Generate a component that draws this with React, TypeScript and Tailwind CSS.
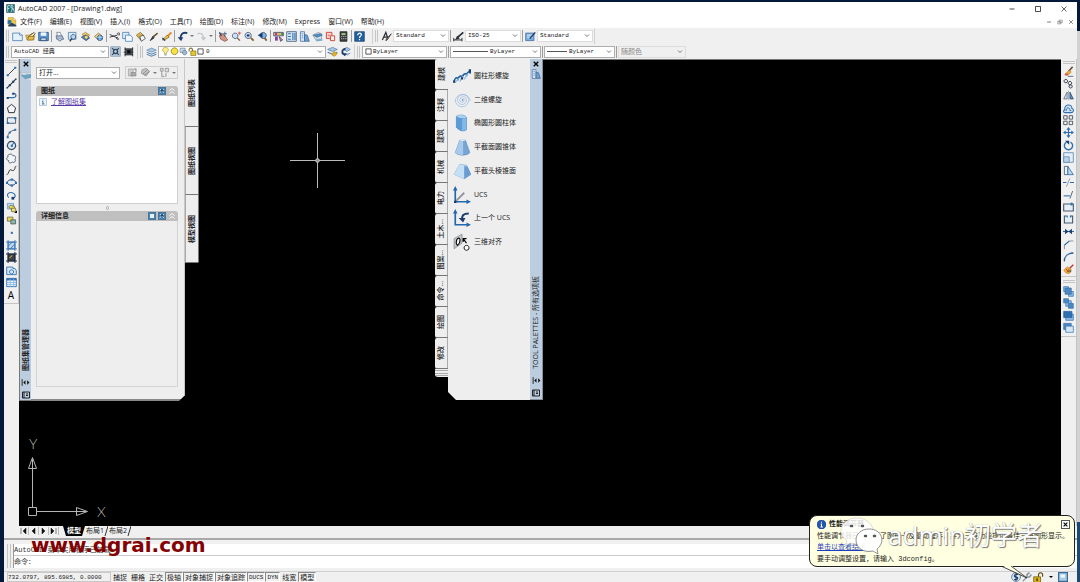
import React from 'react';

type Stroke = [d: string, fill?: string, stroke?: string, width?: number];

const NAVY = '#1d3c6b';
const BLUE = '#2f6fb0';
const SKY = '#8fbbe4';
const PALE = '#d6e6f5';
const INK = '#2b2f36';
const GREY = '#8d949c';
const GOLD = '#e3b02c';
const NONE = 'none';

// every glyph is drawn on a 16 x 16 grid
const GLYPHS: Record<string, Stroke[]> = {
  newFile: [['M1 3h10l4 3v8H1z', '#e4f1fb', BLUE], ['M11 3v3h4', '#fff', BLUE]],
  open: [['M1 6h6l2-2h4v9H3z', '#f0cf67', '#9c7a20'], ['M4 9l9-7 2 2-8 8z', '#f7e39c', INK], ['M3 13l3-5h8l-3 5z', '#e6bd4e', '#8f6f1d']],
  save: [['M1 2h14v12H1z', '#5b9bd0', NAVY], ['M4 2h8v5H4z', '#eef5fb', NONE], ['M4 10h8v4H4z', '#c5d8e8', NAVY]],
  plot: [['M5 7L4 2h5l2 5', '#fff', '#5a6a80'], ['M3 7h9l2 5H4z', '#aebfd2', '#40577a'], ['M6 12a2.500 2.500 0 1 0 5 0', '#dfe7ef', '#40577a']],
  preview: [['M2 2h11v10H2z', '#dcebf8', BLUE], ['M9 5a3.500 3.500 0 1 0 .1 0', '#b7d6ef', NAVY], ['M7 11l-3 4', NONE, INK, 1.800]],
  publish: [['M3 5l5-3 6 4-5 4z', '#f3d573', '#8f6f1d'], ['M2 9l6-3 6 4-5 4z', '#6aa3d6', NAVY], ['M9 6a3 3 0 1 0 .1 0', '#f3d573', NAVY]],
  globe: [['M2 8l6-5 6 5-6 5z', '#efd27a', '#7c6b3d'], ['M10 6a4 4 0 1 0 .1 0', '#4f92cf', NAVY], ['M6 9h8M10 6v8', NONE, '#dfeefa']],
  cut: [['M1 5l11 5M1 9l11-3', NONE, INK, 1.3], ['M12 9a2 1.6 0 1 0 2 3zM12 4a2 1.6 0 1 1 2 2z', NONE, INK, 1.2]],
  copy: [['M1 2h9v9H1z', '#e2effa', BLUE], ['M5 6h7l3 3v6H5z', '#f5fafe', BLUE]],
  paste: [['M2 6l6-4 5 5-5 6z', '#dcb55a', '#7d5d1b'], ['M7 8l5-2 3 5-6 4z', '#f3f7fa', INK]],
  match: [['M14 3L7 9', NONE, '#6b5330', 2.2], ['M7 8l2 2-6 4z', INK, INK]],
  brush: [['M15 2L9 8', NONE, '#dd8f32', 3], ['M9 6l3 3-7 4H2z', '#f0c149', '#7d5d1b'], ['M2 10l4 4', NONE, NAVY, 2]],
  undo: [['M15 3C7 1 5 6 5 12', NONE, NAVY, 2.600], ['M1 9h8l-3 6z', NAVY, NONE]],
  redo: [['M2 4c7-2 9 2 9 9', NONE, '#c2c7cc', 2], ['M7 9h8l-4 5z', '#c2c7cc', NONE]],
  pan: [['M2 7l3-4 5 4 4 6-4 2-6-3z', '#d49484', '#7e4a3e'], ['M10 1v7M7 4h6', NONE, NAVY], ['M2 2l3 5', NONE, NAVY, 1.800]],
  zoomLive: [['M6 3a4 4 0 1 0 .1 0', '#cfe2f3', NAVY], ['M9 10l4 4', NONE, '#835f2b', 2], ['M12 1v5M10 3h5', NONE, '#c03a2b']],
  zoomWin: [['M6 2a4.500 4.500 0 1 0 .1 0', '#cfe2f3', NAVY], ['M10 10l4 4', NONE, '#835f2b', 2.500], ['M4 5h4v3H4z', NAVY, NONE]],
  zoomPrev: [['M9 2a4.500 4.500 0 1 0 .1 0', '#7fb2de', NAVY], ['M11 10l3 4', NONE, '#835f2b', 2.500], ['M1 6l7-4v8z', NAVY, NONE]],
  props: [['M1 2h14v5H1z', '#c9c2e8', INK], ['M3 3h3v3H3z', '#c0392b', NONE], ['M8 3h3v3H8z', '#e3b02c', NONE], ['M12 3h3v3h-3z', '#368a4b', NONE], ['M3 8h4v6H3z', '#7a3fa0', NONE], ['M9 8l5 5-3 2z', '#d58bb3', INK]],
  dcenter: [['M1 1h14v14H1z', '#d7e6f3', NAVY], ['M3 4h4M3 8h4M3 12h4M10 3v10M13 3v10', NONE, BLUE, 1.600]],
  palettes: [['M2 1h6v14H2z', '#d6e6f5', '#3b6090'], ['M8 5l4 1 3 9H8z', '#6b9fce', '#3b6090'], ['M4 4h2M4 7h2M4 10h2', NONE, BLUE]],
  sheets: [['M1 6l8-4 5 2v8l-7 3z', '#d1dae2', '#8d99a5'], ['M2 6l10-2 3 2-8 3z', '#4f90c9', '#3a6d9c'], ['M6 12h9v2H7z', '#6aa3d6', NONE]],
  markup: [['M2 2h8v9H2z', '#fbdcd8', '#d04a3c', 1.4], ['M8 7h6v7H8z', '#f2f2f2', '#d04a3c', 1.4], ['M4 5h4v3H4z', '#e89086', NONE]],
  calc: [['M3 1h10v14H3z', '#3a3c3e', '#1d1e1f'], ['M5 3h6v3H5z', '#9fc27e', NONE], ['M5 8h1M8 8h1M11 8h1M5 11h1M8 11h1M11 11h1', NONE, '#ececec', 1.800]],
  help: [['M1 1h14v14H1z', '#215fa0', NAVY], ['M5.500 6c0-4 6-3.500 5 0-.5 1.500-2.500 1.800-2.500 4M8 11.500v2', NONE, '#fff', 1.800]],
  textStyle: [['M2 13L7 2l3 9M4 9h5', NONE, INK, 1.800], ['M15 4l-6 9-2 1 1-3z', '#8b6b4a', INK]],
  dimStyle: [['M1 13h12M1 10v5M13 10v5', NONE, INK, 1.4], ['M15 2L7 9', NONE, INK, 2.600], ['M6 7l4 4-7 2z', INK, NONE]],
  tableStyle: [['M1 3h12v11H1z', '#78aee0', '#3b6090'], ['M3 6h8M3 9h8', NONE, '#e8f2fb', 1.4], ['M15 2L7 11', NONE, NAVY, 2]],
  gear: [['M1 1h14v14H1z', '#b7cadc', '#7b95ae'], ['M8 5a3 3 0 1 0 .1 0', NONE, '#33475c', 2], ['M3 3l3 3M13 3l-3 3M3 13l3-3M13 13l-3-3', NONE, '#33475c', 1.500]],
  myspace: [['M3 4h11v9H3z', '#4e5256', '#202224'], ['M6 6h5v5H6z', '#0e0f10', NONE], ['M3 2v3M14 2v3M3 15v-3M14 15v-3M1 9h3M12 9h3', NONE, INK, 1.400]],
  layers: [['M1 6l7-3 7 3-7 3z', '#a9c8e4', '#5f89b2'], ['M1 9l7 3 7-3M1 12l7 3 7-3', NONE, '#5f89b2', 1.500]],
  bulb: [['M8 1a4 4 0 0 0-2 8v3h4V9a4 4 0 0 0-2-8z', '#fbef8c', '#a18b2d'], ['M6 13h4v2H6z', '#8c9299', NONE]],
  sun: [['M8 1.500a6 6 0 1 0 .1 0', '#f7e145', '#8b7e1d', 1.400]],
  sunVp: [['M2 2h9v8H2z', '#c6d6e6', '#5c7894'], ['M10 6a4 4 0 1 0 .1 0', '#9fb9d1', '#44617e']],
  unlock: [['M2 8V5c0-4 6-4 6 0v3', NONE, '#81701f', 1.800], ['M5 7h9v8H5z', '#e5c92f', '#6f5f14']],
  swatch: [['M2 2h12v12H2z', '#fff', INK, 1.800]],
  layerSet: [['M1 5l7-3 7 3-7 3z', '#a9c8e4', '#4c76a0'], ['M1 9l7 3 7-3', NONE, '#4c76a0', 1.600], ['M10 8l5 3-4 4-4-2z', GOLD, '#b08d20']],
  layerPrev: [['M5 5l5-3 5 3-5 3zM6 11l5 2 4-3', '#a9c8e4', '#4c76a0'], ['M8 4C3 5 2 8 5 12', NONE, NAVY, 2.600], ['M2 10l8 1-3 4z', NAVY, NONE]],
  line: [['M3 13L13 3', NONE, INK, 1.300], ['M1 12h3v3H1zM12 1h3v3h-3z', BLUE, NONE]],
  xline: [['M1 15L15 1', NONE, INK, 1.500], ['M1 13h2v2H1zM13 1h2v2h-2zM4 9h3v3H4zM9 4h3v3H9z', NAVY, NONE]],
  pline: [['M2 11h9c5 0 4-6 0-6', NONE, BLUE, 1.800], ['M1 10h3v3H1zM9 4h3v3H9z', NAVY, NONE]],
  polygon: [['M8 2l6 5-2 7H4L2 7z', '#f3f6f9', INK, 1.400]],
  rect: [['M2 4h12v8H2z', '#e6eff8', '#46586c', 1.400], ['M1 10h3v3H1zM12 3h3v3h-3z', BLUE, NONE]],
  arc: [['M2 14C3 7 8 3 14 3', NONE, '#46586c', 1.400], ['M1 12h3v3H1zM4 5h3v3H4zM12 1h3v3h-3z', BLUE, NONE]],
  circle: [['M8 2a6 6 0 1 0 .1 0', '#dbe9f6', '#33475c', 1.600], ['M8 8l4-4', NONE, BLUE, 1.500], ['M7 7h3v3H7z', BLUE, NONE]],
  cloud: [['M5 2c3-1 4 0 5 2 4-1 5 3 3 5 2 3-1 6-4 4-3 3-6 1-5-2-4-1-4-4-1-5-1-2 0-4 2-4z', '#f3f6f9', '#46586c', 1.300]],
  spline: [['M1 14c3 0 3-8 6-7s3 2 5 0 0-5 3-5', NONE, INK, 1.400]],
  ellipse: [['M8 4c-8 0-8 8 0 8s8-8 0-8z', '#e6eff8', NAVY, 1.400], ['M7 2h3v3H7zM7 11h3v3H7zM0 7h3v3H0zM13 7h3v3h-3z', BLUE, NONE]],
  ellArc: [['M4 11C-1 6 5 3 9 4s7 6 1 8', NONE, BLUE, 1.600], ['M8 10h4v4H8z', NAVY, NONE]],
  insert: [['M2 2h9v8H2z', '#bcd6ee', '#5f89b2'], ['M6 5a4 3 0 1 0 6 1z', '#eddc62', '#5c5a30'], ['M8 9h6v5H8z', '#efe07a', '#5c5a30'], ['M16 12v4h-4z', '#000', NONE]],
  block: [['M2 3h8v6H2z', '#e8d658', '#5c5a30'], ['M7 7h7v6H7z', '#8bb8a0', '#33475c']],
  point: [['M7 7h3v3H7z', BLUE, NONE]],
  hatch: [['M3 3h10v10H3z', '#bad6ec', BLUE, 1.200], ['M3 0v16M13 0v16M0 3h16M0 13h16M3 9l6-6M6 13l7-7', NONE, BLUE, 1.200]],
  gradient: [['M3 3h10v10H3z', '#3d4146', '#151617'], ['M3 0v16M13 0v16M0 3h16M0 13h16', NONE, '#1b2c44', 1.500], ['M5 9l4-4', NONE, '#b9a24b', 1.500]],
  region: [['M1 3h9v2h3l2 3v6H1z', '#d6e6f5', BLUE, 1.300], ['M8 7a3 3 0 1 0 .1 0', NONE, BLUE, 1.400]],
  table: [['M1 2h14v12H1z', '#eaf3fb', BLUE, 1.300], ['M1 2h14v3H1z', BLUE, NONE], ['M1 8h14M1 11h14M6 3v11M11 3v11', NONE, SKY, 1.300]],
  erase: [['M14 1L8 8', NONE, '#6d4a2b', 2.400], ['M9 6l3 3-5 4-4-1z', '#e9b23a', '#b07a2b'], ['M2 12l4-2 2 3-4 1z', '#d65a49', NONE], ['M7 15h8', NONE, NAVY]],
  copyObj: [['M4 2a2.500 2.500 0 1 0 .1 0M10 5a2.500 2.500 0 1 0 .1 0M11 10a2.300 2.300 0 1 0 .1 0', '#e8eff6', INK, 1.400]],
  mirror: [['M6 3v10H1z', '#d5e3ef', '#46586c'], ['M10 3v10h5z', '#5f90bd', NAVY], ['M8 1v14', NONE, GREY]],
  offset: [['M3 10C0 3 13-1 13 8c4 1 2 6-1 6H3c-3 0-3-4 0-4z', '#cfe2f3', BLUE, 1.500], ['M5 11c0-6 5-5 5 0h2', NONE, BLUE, 1.400]],
  array: [['M1 1h5v5H1zM9 1h5v5H9zM1 9h5v5H1zM9 9h5v5H9z', '#f2f2f2', '#46505a', 1.300]],
  move: [['M8 2v12M2 8h12', NONE, BLUE, 1.800], ['M8 0l3 4H5zM8 16l3-4H5zM0 8l4-3v6zM16 8l-4-3v6z', BLUE, NONE]],
  rotate: [['M5 3a6 6 0 1 0 6 0', NONE, BLUE, 2], ['M3 1h6v6z', NAVY, NONE]],
  scale: [['M1 1h14v14H1z', '#e3eef8', '#6d8fb1', 1.300], ['M1 7h8v8H1z', '#b8d3ea', '#6d8fb1', 1.300]],
  stretch: [['M2 2h5v12H2z', '#eef3f7', '#46586c', 1.200], ['M7 2l8 12H7z', '#bcd6ec', BLUE, 1.200]],
  trim: [['M0 8h5M10 8h6', NONE, BLUE, 1.600], ['M10 2L5 14', NONE, GREY, 1.300]],
  extend: [['M1 10h9', NONE, BLUE, 1.600], ['M14 3l-4 11', NONE, '#46586c', 1.300]],
  breakPt: [['M1 3h14v10H1z', '#e7eff6', '#46586c', 1.600], ['M11 1h3v4h-3z', BLUE, NONE]],
  breakObj: [['M5 3H2v10h12V3h-3', '#e7eff6', '#46586c', 1.600], ['M5 2h2v3H5zM10 2h2v3h-2z', BLUE, NONE]],
  join: [['M0 8h16', NONE, BLUE, 1.600], ['M3 4l5 4-5 4zM13 4L8 8l5 4z', NAVY, NONE]],
  chamfer: [['M2 15V9l7-6h6', NONE, GREY, 1.500], ['M2 9l7-6', NONE, BLUE, 1.500]],
  fillet: [['M2 15C2 7 7 3 15 3', NONE, BLUE, 1.800], ['M2 11v4M11 3h4', NONE, '#46586c', 1.500]],
  explode: [['M15 1L9 7', NONE, '#c0392b', 2], ['M6 4l6 4-3 6-5-1-3-4z', '#e9b23a', '#c98a3a'], ['M4 7l5 5M9 7l-3 5', NONE, '#c0392b', 1.300], ['M9 9h3v3H9z', '#5a7a3a', NONE]],
  front: [['M1 1h7v7H1z', SKY, BLUE], ['M8 8h7v7H8z', SKY, BLUE], ['M3 3h9v9H3z', '#4f86bd', BLUE]],
  back: [['M4 4h8v8H4z', SKY, BLUE], ['M1 1h7v6H1zM8 8h7v7H8z', '#4f86bd', BLUE]],
  above: [['M4 6h11v9H4z', SKY, BLUE], ['M1 2h12v9H1z', BLUE, '#28609b']],
  under: [['M1 2h11v9H1z', '#4f86bd', BLUE], ['M4 6h11v9H4z', PALE, BLUE]],
  helix: [['M1 13c1-5 4-4 3-1 1-5 5-5 4-2 1-5 5-5 4-2 0-4 4-5 3-2', NONE, '#1f5f9f', 1.300], ['M2 14l3-4M6 13l3-5M10 11l3-5', NONE, SKY, 1], ['M0 12h2v2H0zM14 2h2v3h-2zM7 9h2v2H7z', NAVY, NONE]],
  spiral: [['M8 8a1 1 0 0 1 2 0a2 2 0 0 1-4 0a3 3 0 0 1 6 0a4 4 0 0 1-8 0a5 5 0 0 1 10 0a6 6 0 0 1-12 0a7 7 0 0 1 13.500 1', NONE, '#86addb', .5], ['M8 8h1', NONE, BLUE, 1]],
  ellCyl: [['M3 2c3-2 8-1 9 1v11c-3 2-6 1-9-2z', '#5b9bd8', '#3d7ab5', .5], ['M3 2c3-2 8-1 9 1-2 1-7 1-9-1z', '#a9d0f0', NONE], ['M8 4l4-.5V14c-1 .8-3 1-4 .6z', '#82b7e6', NONE]],
  cone: [['M6 2h5l4 11c-3 3-10 3-13 0z', '#76a5d6', '#5584b5', .5], ['M6 2h3v13c-4 0-6-1-7-2z', '#a9c9ea', NONE], ['M6 2c1-1 4-1 5 0-1 1-4 1-5 0z', '#d3e5f6', NONE]],
  frustum: [['M6 2l6 1 4 8-6 4-9-4z', '#9fc4ea', '#7ba4cc', .5], ['M6 2l4 1v12l-9-4z', '#c5dff5', NONE], ['M10 4l3 0 3 7-6 4z', '#6b9cd0', NONE]],
  ucs: [['M2 2v12h12', NONE, '#2368ac', 1.500], ['M0 4l2-4 2 4zM12 12l4 2-4 2z', '#2368ac', NONE], ['M3 13l7-7', NONE, GREY, 1.600], ['M1 13h2v2H1z', '#16365e', NONE]],
  ucsPrev: [['M2 2v12h12', NONE, '#2368ac', 1.500], ['M0 4l2-4 2 4zM12 12l4 2-4 2z', '#2368ac', NONE], ['M14 4C9 4 8 6 8 9', NONE, NAVY, 1.800], ['M5 8h6l-2 4z', NAVY, NONE]],
  align: [['M1 5l7-4v8l-7 5z', '#c8c8c8', GREY, .8], ['M4 5c3-2 3 4 0 6-2-1-1-5 0-6z', '#f4f4f4', '#000', 1], ['M12 11a2.200 2.200 0 1 0 .1 0', '#fff', '#000', .8], ['M12 9L9 5M9 8V5h3', NONE, '#000', 1]],
  stack: [['M0 3l10 2 6-2v4L6 8z', '#eef3f7', '#9caab6', .8], ['M2 8l14-2v5L8 13z', '#6ba4c9', '#6a92ae', .8], ['M8 13l8-1v3z', '#d4dde5', NONE]],
  sheetA: [['M2 3h7v10H2z', '#cfcfcf', '#999'], ['M6 8h7v5H6z', '#aaa', '#888'], ['M10 3l3 0v4', NONE, '#888', 1.500]],
  sheetB: [['M3 4l6-2 5 4-5 7-7-4z', '#c5c5c5', '#888'], ['M4 10l7-6M6 12l7-5', NONE, '#777']],
  tree: [['M2 2h4v4H2zM9 2h5v5H9zM4 6v8h4', '#ddd', '#999', 1.300], ['M10 9v5', NONE, '#aaa', 2]],
  autohide: [['M2 2v12', NONE, '#111', 1.500], ['M8 4v8L4 8zM11 4v8l4-4z', '#111', NONE]],
  menuBox: [['M1 2h14v12H1z', NONE, '#111', 1.800], ['M4 2v12M8 6h4M8 9h4', NONE, '#111', 1.800]],
  close: [['M2 2l12 12M14 2L2 14', NONE, '#000', 3.600]],
  closeThin: [['M3 3l10 10M13 3L3 13', NONE, '#111', 1.300]],
  min: [['M3 8h10', NONE, '#111', 1.500]],
  max: [['M3 3h10v10H3z', NONE, '#111', 1.500]],
  restore: [['M6 3h8v7H6zM2 6h8v7H2z', '#fff', '#555', 1.300]],
  dwg: [['M2 1h8l4 4v8H2z', '#f1ca48', '#b8952f'], ['M1 5h6v6H1z', '#2e6ca8', NONE], ['M2 13l6-4 7 4v2H2z', '#2a4568', NONE], ['M10 1v4h4', '#fff', '#b8952f']],
  logo: [['M1 1h14v14H1z', '#1e6e78', '#18454c'], ['M3 14V3h4M3 8h3M9 2c5 0 4 5 0 5zM9 14l3-7 3 7', NONE, '#d2f0f2', 1.500]],
  sheetBtn: [['M0 0h16v16H0z', '#4f81a8', '#31587a'], ['M4 4h8v8H4z', '#e3f1fb', NONE]],
  sheetBtn2: [['M0 0h16v16H0z', '#4f81a8', '#31587a'], ['M3 12l9-8M4 4l8 8', NONE, '#c5dced', 1.800], ['M6 5h4v4H6z', '#1f3f66', NONE]],
  chevUp: [['M3 7l5-4 5 4M3 13l5-4 5 4', NONE, '#fff', 1.800]],
  info: [['M1 1h14v14H1z', '#eef6fd', '#9cb9d4', 1.500], ['M8 3v2M6 7h2v5M6 12h5', NONE, '#2c5a8a', 1.500]],
  infoBall: [['M8 0a8 8 0 1 0 .1 0', '#2257b3', '#173a80'], ['M8 3v2M6.500 7H8v5M6 12.500h4.500', NONE, '#fff', 1.800]],
  commCenter: [['M8 1a7 7 0 1 0 .1 0', '#dce8f2', '#4b6f91', 1.300], ['M11 4C4 3 4 8 8 8s4 5-3 4M8 2v12', NONE, NAVY, 1.800]],
  plug: [['M1 15l7-7', NONE, GREY, 2], ['M8 8l4 0 3-4M8 8V4l4-3', NONE, GREY, 2.500]],
  lock: [['M8 7V4c0-4 6-4 6 0v3', NONE, '#5c4a05', 1.600], ['M1 7h10v8H1z', '#dfb516', '#5c4a05'], ['M6 9v4', NONE, '#3b2f00', 2]],
  screen: [['M1 1h14v14H1z', '#a9cce6', '#3b6c95', 2], ['M4 4h7v5H4z', '#f0f8fd', NONE]],
};

const Glyph = ({ name, className = 'size-[11px]' }: { name: string; className?: string }) => (
  <svg viewBox="0 0 16 16" className={`shrink-0 ${className}`} aria-hidden="true">
    {GLYPHS[name].map(([d, fill = NONE, stroke = NONE, width = 1], i) => (
      <path key={i} d={d} fill={fill} stroke={stroke} strokeWidth={width} />
    ))}
  </svg>
);

const ToolButton = ({ name, wide = true }: { name: string; wide?: boolean }) => (
  <button aria-label={name} className={`flex h-3 shrink-0 items-center justify-center ${wide ? 'w-[13px]' : 'w-3'}`}>
    <Glyph name={name} />
  </button>
);

const Sep = () => <span className="mx-px h-3 w-px shrink-0 bg-[#9c9c9c]" />;

const Grip = () => (
  <span className="mx-[2px] flex shrink-0 gap-px">
    <i className="h-3 w-px bg-[#c4c4c4]" />
    <i className="h-3 w-px bg-[#c4c4c4]" />
  </span>
);

const Arrow = () => (
  <span className="flex w-[6px] shrink-0 justify-center">
    <i className="border-x-2 border-t-2 border-x-transparent border-t-[#777]" />
  </span>
);

interface ComboProps {
  label: string;
  value: string;
  width: string;
  lead?: React.ReactNode;
  tone?: string;
  mono?: boolean;
}

const Combo = ({ label, value, width, lead, tone = 'border-[#adadad] bg-white text-[#222]', mono = true }: ComboProps) => (
  <div className={`relative flex h-3 shrink-0 items-center border pl-[2px] ${tone} ${width}`}>
    {lead}
    <select
      aria-label={label}
      className={`h-full min-w-0 flex-1 appearance-none bg-transparent leading-[10px] outline-none ${
        mono ? "font-['Liberation_Mono','Noto_Sans_CJK_SC',monospace] text-[6px]" : 'text-[7px]'
      }`}
    >
      <option>{value}</option>
    </select>
    <svg viewBox="0 0 6 4" className="pointer-events-none absolute right-[2px] h-1 w-[6px]" aria-hidden="true">
      <path d="M1 .5l2 2 2-2" fill="none" stroke="#777" />
    </svg>
  </div>
);

const MENUS = ['文件(F)', '编辑(E)', '视图(V)', '插入(I)', '格式(O)', '工具(T)', '绘图(D)', '标注(N)', '修改(M)', 'Express', '窗口(W)', '帮助(H)'];

const STANDARD_BAR = [
  ['newFile', 'open', 'save'],
  ['plot', 'preview', 'publish', 'globe'],
  ['cut', 'copy', 'paste', 'match', 'brush'],
  ['undo', '>', 'redo', '>'],
  ['pan', 'zoomLive', 'zoomWin', 'zoomPrev'],
  ['props', 'dcenter', 'palettes', 'sheets', 'markup', 'calc'],
  ['help'],
];

const DRAW_TOOLS = ['line', 'xline', 'pline', 'polygon', 'rect', 'arc', 'circle', 'cloud', 'spline', 'ellipse', 'ellArc', 'insert', 'block', 'point', 'hatch', 'gradient', 'region', 'table'];

const MODIFY_TOOLS = ['erase', 'copyObj', 'mirror', 'offset', 'array', 'move', 'rotate', 'scale', 'stretch', 'trim', 'extend', 'breakPt', 'breakObj', 'join', 'chamfer', 'fillet', 'explode'];

const PALETTE_TABS = ['建模', '注释', '建筑', '机械', '电力', '土木...', '图案...', '命令...', '绘图', '修改'];

const PALETTE_TOOLS = [
  { icon: 'helix', label: '圆柱形螺旋' },
  { icon: 'spiral', label: '二维螺旋' },
  { icon: 'ellCyl', label: '椭圆形圆柱体' },
  { icon: 'cone', label: '平截面圆锥体' },
  { icon: 'frustum', label: '平截头棱锥面' },
  { icon: 'ucs', label: 'UCS' },
  { icon: 'ucsPrev', label: '上一个 UCS' },
  { icon: 'align', label: '三维对齐' },
];

const STATUS_TOGGLES = [
  { label: '捕捉', on: false },
  { label: '栅格', on: false },
  { label: '正交', on: false },
  { label: '极轴', on: true },
  { label: '对象捕捉', on: true },
  { label: '对象追踪', on: true },
  { label: 'DUCS', on: true },
  { label: 'DYN', on: true },
  { label: '线宽', on: false },
  { label: '模型', on: true },
];

const Vertical = ({ children }: { children: React.ReactNode }) => (
  <span className="rotate-180 leading-[10px] whitespace-nowrap [text-orientation:sideways] [writing-mode:vertical-rl]">{children}</span>
);

const Header = () => (
  <header className="bg-white text-[#222]">
    <div className="flex h-[13px] items-center pl-[2px]">
      <Glyph name="logo" className="size-[9px]" />
      <h1 className="ml-[3px] text-[7px] leading-[13px]">AutoCAD 2007 - [Drawing1.dwg]</h1>
      <div className="mr-[9px] ml-auto flex gap-[18px]">
        {['min', 'max', 'closeThin'].map(n => (
          <button key={n} aria-label={n} className="flex"><Glyph name={n} className="size-2" /></button>
        ))}
      </div>
    </div>
    <div className="flex h-[13px] items-center pl-[3px]">
      <Glyph name="dwg" className="size-[10px]" />
      <nav className="ml-[3px] flex gap-2 text-[7px] leading-[13px]">
        {MENUS.map(m => <button key={m}>{m}</button>)}
      </nav>
      <div className="mr-[3px] ml-auto flex gap-[5px]">
        {['min', 'restore', 'closeThin'].map(n => (
          <button key={n} aria-label={`drawing ${n}`} className="flex"><Glyph name={n} className="size-[6px]" /></button>
        ))}
      </div>
    </div>
  </header>
);

const Toolbars = () => (
  <div className="bg-[#f0f0f0]">
    <div className="flex h-4 items-center">
      <div className="flex h-[15px] items-center border-r border-[#d0d0d0] pr-[6px]">
        <Grip />
        {STANDARD_BAR.map((group, g) => (
          <React.Fragment key={g}>
            {g > 0 && <Sep />}
            {group.map((n, i) => (n === '>' ? <Arrow key={i} /> : <ToolButton key={n} name={n} />))}
          </React.Fragment>
        ))}
      </div>
      <div className="flex h-[15px] items-center border-r border-[#d0d0d0] pr-px">
        <Grip />
        <ToolButton name="textStyle" />
        <Combo label="文字样式" value="Standard" width="w-14" tone="border-[#dcdcdc] bg-white text-[#222]" />
        <Sep />
        <ToolButton name="dimStyle" />
        <Combo label="标注样式" value="ISO-25" width="w-14" tone="border-[#dcdcdc] bg-white text-[#222]" />
        <Sep />
        <ToolButton name="tableStyle" />
        <Combo label="表格样式" value="Standard" width="w-14" tone="border-[#dcdcdc] bg-white text-[#222]" />
      </div>
    </div>
    <div className="flex h-[15px] items-center">
      <Grip />
      <Combo label="工作空间" value="AutoCAD 经典" width="w-[98px]" />
      <ToolButton name="gear" />
      <ToolButton name="myspace" />
      <span className="ml-[2px] h-[15px] border-r border-[#d0d0d0]" />
      <Grip />
      <ToolButton name="layers" />
      <Combo
        label="图层"
        value="0"
        width="w-[168px]"
        lead={['bulb', 'sun', 'sunVp', 'unlock', 'swatch'].map(n => (
          <Glyph key={n} name={n} className={n === 'swatch' ? 'mr-[2px] size-[7px]' : 'size-[9px]'} />
        ))}
      />
      <ToolButton name="layerSet" />
      <ToolButton name="layerPrev" />
      <span className="ml-[2px] h-[15px] border-r border-[#d0d0d0]" />
      <Grip />
      <Combo label="颜色" value="ByLayer" width="w-[85px]" lead={<Glyph name="swatch" className="mr-px size-[7px]" />} />
      <Sep />
      <Combo label="线型" value="ByLayer" width="w-[91px]" lead={<i className="mr-[2px] h-px w-[35px] bg-[#555]" />} />
      <Sep />
      <Combo label="线宽" value="ByLayer" width="w-[71px]" lead={<i className="mr-[2px] h-px w-5 bg-[#555]" />} />
      <Sep />
      <Combo label="打印样式" value="随颜色" width="w-[68px]" mono={false} tone="border-[#dcdcdc] bg-[#f0f0f0] text-[#888]" />
    </div>
  </div>
);

const PanelTitle = ({ title, icons }: { title: string; icons: string[] }) => (
  <div className="flex h-[10px] shrink-0 items-center rounded-t-[3px] bg-[#bfbfbf] pr-[2px] pl-[5px]">
    <h2 className="mr-auto text-[7px] leading-[10px] font-bold text-[#222]">{title}</h2>
    <span className="flex items-center gap-[2px]">
      {icons.map(n => <button key={n} aria-label={n} className="flex"><Glyph name={n} className="size-2" /></button>)}
    </span>
  </div>
);

const SheetSetManager = () => (
  <section className="absolute -top-px left-0 flex h-[342px] text-[7px] text-[#222]">
    <div className="flex w-3 flex-col items-center border-b border-l border-[#777] bg-[#bccddf] pb-px">
      <button aria-label="关闭" className="mt-[2px] flex"><Glyph name="close" className="size-[6px]" /></button>
      <Glyph name="stack" className="mt-[3px] size-[11px]" />
      <span className="mt-auto mb-1 font-bold"><Vertical>图纸集管理器</Vertical></span>
      <Glyph name="autohide" className="mb-1 size-[9px]" />
      <Glyph name="menuBox" className="size-2" />
    </div>
    <div className="w-[154px] bg-[#888] pb-[2px] [clip-path:polygon(0_0,100%_0,100%_calc(100%-6px),calc(100%-6px)_100%,0_100%)]">
      <div className="flex h-full flex-col border-r border-[#c8c8c8] bg-[#eeeeee] pt-[7px] pr-[6px] pb-3 pl-[5px]">
        <div className="mb-[7px] flex items-center justify-between">
          <Combo label="图纸集" value="打开..." width="w-[84px]" mono={false} />
          <div className="flex h-[13px] items-center border border-[#cfcfcf]">
            <ToolButton name="sheetA" />
            <ToolButton name="sheetB" />
            <Arrow />
            <ToolButton name="tree" />
            <Arrow />
          </div>
        </div>
        <PanelTitle title="图纸" icons={['sheetBtn2', 'chevUp']} />
        <div className="h-[108px] shrink-0 border border-t-0 border-[#cfcfcf] bg-white px-[2px] pt-px">
          <div className="flex items-center">
            <Glyph name="info" className="size-2" />
            <a href="#sheets" className="ml-1 leading-[9px] text-[#5a3aa8] underline">了解图纸集</a>
          </div>
        </div>
        <div className="flex h-[7px] shrink-0 items-center justify-center">
          <i className="h-1 w-[3px] rounded-full border border-[#aaa]" />
        </div>
        <PanelTitle title="详细信息" icons={['sheetBtn', 'sheetBtn2', 'chevUp']} />
        <div className="flex-1 border border-t-0 border-[#d4d4d4]" />
      </div>
    </div>
    <div className="flex w-[14px] flex-col">
      {['图纸列表', '图纸视图', '模型视图'].map((t, i) => (
        <button
          key={t}
          className={`flex h-[68px] items-center justify-center border-r border-b border-[#777] bg-[#eeeeee] font-bold ${i > 0 ? 'border-l border-l-[#aaa]' : ''} ${i === 2 ? 'rounded-br-[2px]' : ''}`}
        >
          <Vertical>{t}</Vertical>
        </button>
      ))}
    </div>
  </section>
);

const ToolPalettes = () => (
  <section className="absolute -top-px left-[416px] flex h-[341px] text-[7px] text-[#222]">
    <div className="flex w-[13px] flex-col">
      {PALETTE_TABS.map((t, i) => (
        <button
          key={t}
          className={`flex h-[31px] items-center justify-center rounded-l-[2px] border-b border-[#777] bg-[#eeeeee] font-medium ${i > 0 ? 'border-r border-r-[#aaa]' : ''}`}
        >
          <Vertical>{t}</Vertical>
        </button>
      ))}
      <span className="flex h-2 flex-col justify-evenly rounded-bl-[3px] bg-[#eeeeee]">
        <i className="h-px bg-[#aaa]" />
        <i className="h-px bg-[#aaa]" />
        <i className="h-px bg-[#aaa]" />
      </span>
    </div>
    <div className="w-[82px] bg-[#eeeeee] pt-[5px] pl-[5px] [clip-path:polygon(0_0,100%_0,100%_100%,8px_100%,0_calc(100%-8px))]">
      <ul className="flex h-[190px] flex-col">
        {PALETTE_TOOLS.map(t => (
          <li key={t.icon} className="flex flex-1 items-center">
            <button className="flex items-center gap-[3px]">
              <Glyph name={t.icon} className="size-[18px]" />
              <span className="leading-[10px] whitespace-nowrap">{t.label}</span>
            </button>
          </li>
        ))}
      </ul>
    </div>
    <div className="flex w-[13px] flex-col items-center border-r border-b border-[#8a9099] bg-[#bccddf] pb-[2px]">
      <button aria-label="关闭" className="mt-[2px] flex"><Glyph name="close" className="size-[6px]" /></button>
      <Glyph name="palettes" className="mt-[2px] size-[10px]" />
      <span className="mt-auto mb-1"><Vertical>TOOL PALETTES - 所有选项板</Vertical></span>
      <Glyph name="autohide" className="mb-1 size-[9px]" />
      <Glyph name="menuBox" className="size-2" />
    </div>
  </section>
);

const Canvas = () => (
  <main className="relative min-w-0 flex-1 border-t border-[#777] bg-black">
    <SheetSetManager />
    <ToolPalettes />
    {/* crosshair */}
    <svg viewBox="0 0 55 55" className="absolute top-[73px] left-[271px] size-[55px]" aria-hidden="true">
      <path d="M0 27.5h55M27.5 0v55" fill="none" stroke="#bbb" />
      <path d="M26 26h3v3h-3z" fill="#888" stroke="#bbb" />
    </svg>
    {/* UCS axes */}
    <svg viewBox="0 0 90 90" className="absolute bottom-0 left-2 size-[90px]" aria-hidden="true">
      <g fill="none" stroke="#b5b5b5">
        <path d="M1.500 71.500h8v8h-8zM5.500 71.500v-40M9.500 75.500h40" />
        <path d="M5.500 21.500l-4 11h8zM60.500 75.500l-11-4v8zM5.500 23v9M59 75.500h-9" />
      </g>
      <g fill="#b5b5b5" fontFamily="Lato, sans-serif" fontWeight="300" fontSize="14">
        <text x="2" y="13">Y</text>
        <text x="70" y="81">X</text>
      </g>
    </svg>
  </main>
);

const DrawColumn = () => (
  <aside className="w-[15px] shrink-0 bg-[#f0f0f0]">
    <div className="flex flex-col items-center border-r border-b border-[#c4c4c4] pb-[2px]">
      <span className="mt-px mb-[2px] h-[3px] w-3 border-y border-[#c4c4c4]" />
      <div className="flex h-[236px] flex-col justify-between">
        {DRAW_TOOLS.map(n => <ToolButton key={n} name={n} wide={false} />)}
        <button aria-label="多行文字" className="h-3 text-center text-[10px] leading-3 text-black">A</button>
      </div>
    </div>
  </aside>
);

const ModifyColumn = () => (
  <aside className="w-4 shrink-0 border-r border-[#c4c4c4] bg-[#f0f0f0]">
    <div className="flex flex-col items-center border-b border-[#c4c4c4] pb-px">
      <span className="mt-[2px] mb-px h-[3px] w-3 border-y border-[#c4c4c4]" />
      <div className="flex h-[210px] flex-col justify-between">
        {MODIFY_TOOLS.map(n => <ToolButton key={n} name={n} wide={false} />)}
      </div>
    </div>
    <div className="flex flex-col items-center border-b border-[#c4c4c4] pb-[2px]">
      <span className="mt-[3px] mb-[2px] h-[3px] w-3 border-y border-[#c4c4c4]" />
      <div className="flex h-[49px] flex-col justify-between">
        {['front', 'back', 'above', 'under'].map(n => <ToolButton key={n} name={n} wide={false} />)}
      </div>
    </div>
  </aside>
);

const LayoutTabs = () => (
  <div className="ml-[15px] flex h-[10px] items-center text-[7px] leading-[10px] text-[#222]">
    <div className="flex">
      {['M2 1v6M7 1v6L4 4z', 'M6 1v6L3 4z', 'M3 1v6l3-3z', 'M7 1v6M2 1v6l3-3z'].map((d, i) => (
        <button key={d} aria-label={`布局导航 ${i + 1}`} className="flex w-[10px] justify-center border-r border-[#bbb]">
          <svg viewBox="0 0 9 8" className="h-2 w-[9px]"><path d={d} fill="#111" stroke="#111" strokeWidth=".5" /></svg>
        </button>
      ))}
    </div>
    <button className="ml-1 bg-black px-1 font-bold text-white [clip-path:polygon(0_0,100%_0,calc(100%-3px)_100%,3px_100%)]">模型</button>
    {['布局1', '布局2'].map(t => (
      <button key={t} className="flex items-center pl-px">
        {t}
        <svg viewBox="0 0 4 10" className="h-[10px] w-1"><path d="M4 0L1 10" stroke="#333" /></svg>
      </button>
    ))}
  </div>
);

const CommandLine = () => (
  <div className="mt-[2px] flex border-t-2 border-[#a9a9a9] bg-[#f0f0f0] pt-1 pb-[3px] pl-[3px]">
    <span className="mr-[2px] w-1 border-x border-[#c4c4c4]" />
    <div className="flex-1 border-l border-[#999] font-['Liberation_Mono','Noto_Sans_CJK_SC',monospace] text-[7px] text-[#333]">
      <p className="h-3 border-b border-[#ccc] bg-white leading-3">AutoCAD 菜单实用程序已加载.</p>
      <label className="flex h-3 items-center bg-white pt-px">
        命令：
        <input aria-label="命令" className="min-w-0 flex-1 outline-none" />
      </label>
    </div>
  </div>
);

const StatusBar = () => (
  <footer className="flex h-[11px] items-center border-t border-[#d0d0d0] bg-[#f0f0f0] pl-[3px] text-[7px] text-[#222]">
    <output className="h-[10px] w-[104px] border border-[#c8c8c8] font-['Liberation_Mono',monospace] text-[6px] leading-[10px]">
      732.0797, 895.6985, 0.0000
    </output>
    <div className="flex">
      {STATUS_TOGGLES.map(s => (
        <button
          key={s.label}
          aria-pressed={s.on}
          className={`h-[10px] border px-px leading-[9px] ${/^D/.test(s.label) ? "font-['Liberation_Mono',monospace] text-[6px]" : ''} ${
            s.on ? 'border-[#888] border-r-white border-b-white' : 'border-transparent'
          }`}
        >
          {s.label}
        </button>
      ))}
    </div>
    <div className="mr-1 ml-auto flex items-center gap-px">
      <Glyph name="commCenter" className="size-[10px]" />
      <Glyph name="plug" className="size-[10px]" />
      <Glyph name="lock" className="size-[11px]" />
      <i className="mx-1 border-x-2 border-t-2 border-x-transparent border-t-black" />
      <Glyph name="screen" className="mr-[5px] size-[10px]" />
    </div>
  </footer>
);

const Balloon = () => (
  <div role="alert" className="absolute right-[5px] bottom-[15px] w-[266px] rounded-[8px] border border-[#222] bg-[#ffffe1] pt-[3px] pl-[7px] font-['Liberation_Mono','Noto_Sans_CJK_SC',monospace] text-[7px] text-[#222]">
    <div className="flex h-[11px] items-center pr-1">
      <Glyph name="infoBall" className="mr-[3px] size-[9px]" />
      <strong className="leading-[11px]">性能调节器</strong>
      <button aria-label="关闭通知" className="ml-auto flex size-[9px] items-center justify-center border border-[#555] bg-white">
        <Glyph name="close" className="size-[5px]" />
      </button>
    </div>
    <p className="leading-3 whitespace-nowrap">性能调节器已经分析了图形卡及驱动程序，并为三维功能提供最佳三维图形显示。</p>
    <a href="#tuner" className="block w-fit leading-[10px] text-[#1f3fc0] underline">单击以查看结果。</a>
    <p className="mt-px leading-[13px]">要手动调整设置，请输入 3dconfig。</p>
    <svg viewBox="0 0 30 14" className="absolute top-full right-[44px] h-[14px] w-[30px]" aria-hidden="true">
      <path d="M1 -1L27 12L11 -1z" fill="#ffffe1" />
      <path d="M1 0L27 12L11 0" fill="none" stroke="#222" strokeWidth=".8" />
    </svg>
  </div>
);

const ChannelMark = () => (
  <div className="pointer-events-none absolute right-[37px] bottom-7 flex items-center">
    <svg viewBox="0 0 44 38" className="h-[38px] w-11" aria-hidden="true">
      <path d="M17 2C7 2 1 8 1 15c0 4 2 7 6 10l-2 5 6-3c10 3 21-2 22-12C33 8 26 2 17 2z" fill="#fff" fillOpacity=".85" stroke="#bbb" strokeWidth=".5" />
      <path d="M29 13c-8 0-13 5-13 11 0 9 9 13 17 11l5 3-1-5c9-7 5-20-8-20z" fill="#fff" fillOpacity=".95" stroke="#777" strokeWidth=".8" />
      <path d="M11 10h1M22 10h1M25 20h1M34 20h1" stroke="#555" strokeWidth="2.500" strokeLinecap="round" />
    </svg>
    <span className="ml-1 text-[26px] leading-[30px] text-white [text-shadow:1px_1px_1px_#777,0_0_1px_#888]">admin初学者</span>
  </div>
);

const App: React.FC = () => (
  <div className="relative flex h-screen w-full overflow-hidden bg-[#04193a] pt-[2px] pl-1 font-['Open_Sans','Noto_Sans_CJK_SC',sans-serif]">
    <div className="flex min-w-0 flex-1 flex-col bg-[#f0f0f0]">
      <Header />
      <Toolbars />
      <div className="flex min-h-0 flex-1">
        <DrawColumn />
        <Canvas />
        <ModifyColumn />
      </div>
      <LayoutTabs />
      <CommandLine />
      <StatusBar />
    </div>
    <div className="flex w-[3px] flex-col">
      <i className="h-[29px]" />
      <i className="flex-1 bg-[#d2d2d2]" />
      <i className="h-[60px] bg-[#1b4a72]" />
    </div>
    <Balloon />
    <ChannelMark />
    <span className="pointer-events-none absolute bottom-[25px] left-[31px] font-['DejaVu_Sans',sans-serif] text-[20px] leading-6 font-bold text-[#850000]">
      www.dgrai.com
    </span>
  </div>
);

export default App;
